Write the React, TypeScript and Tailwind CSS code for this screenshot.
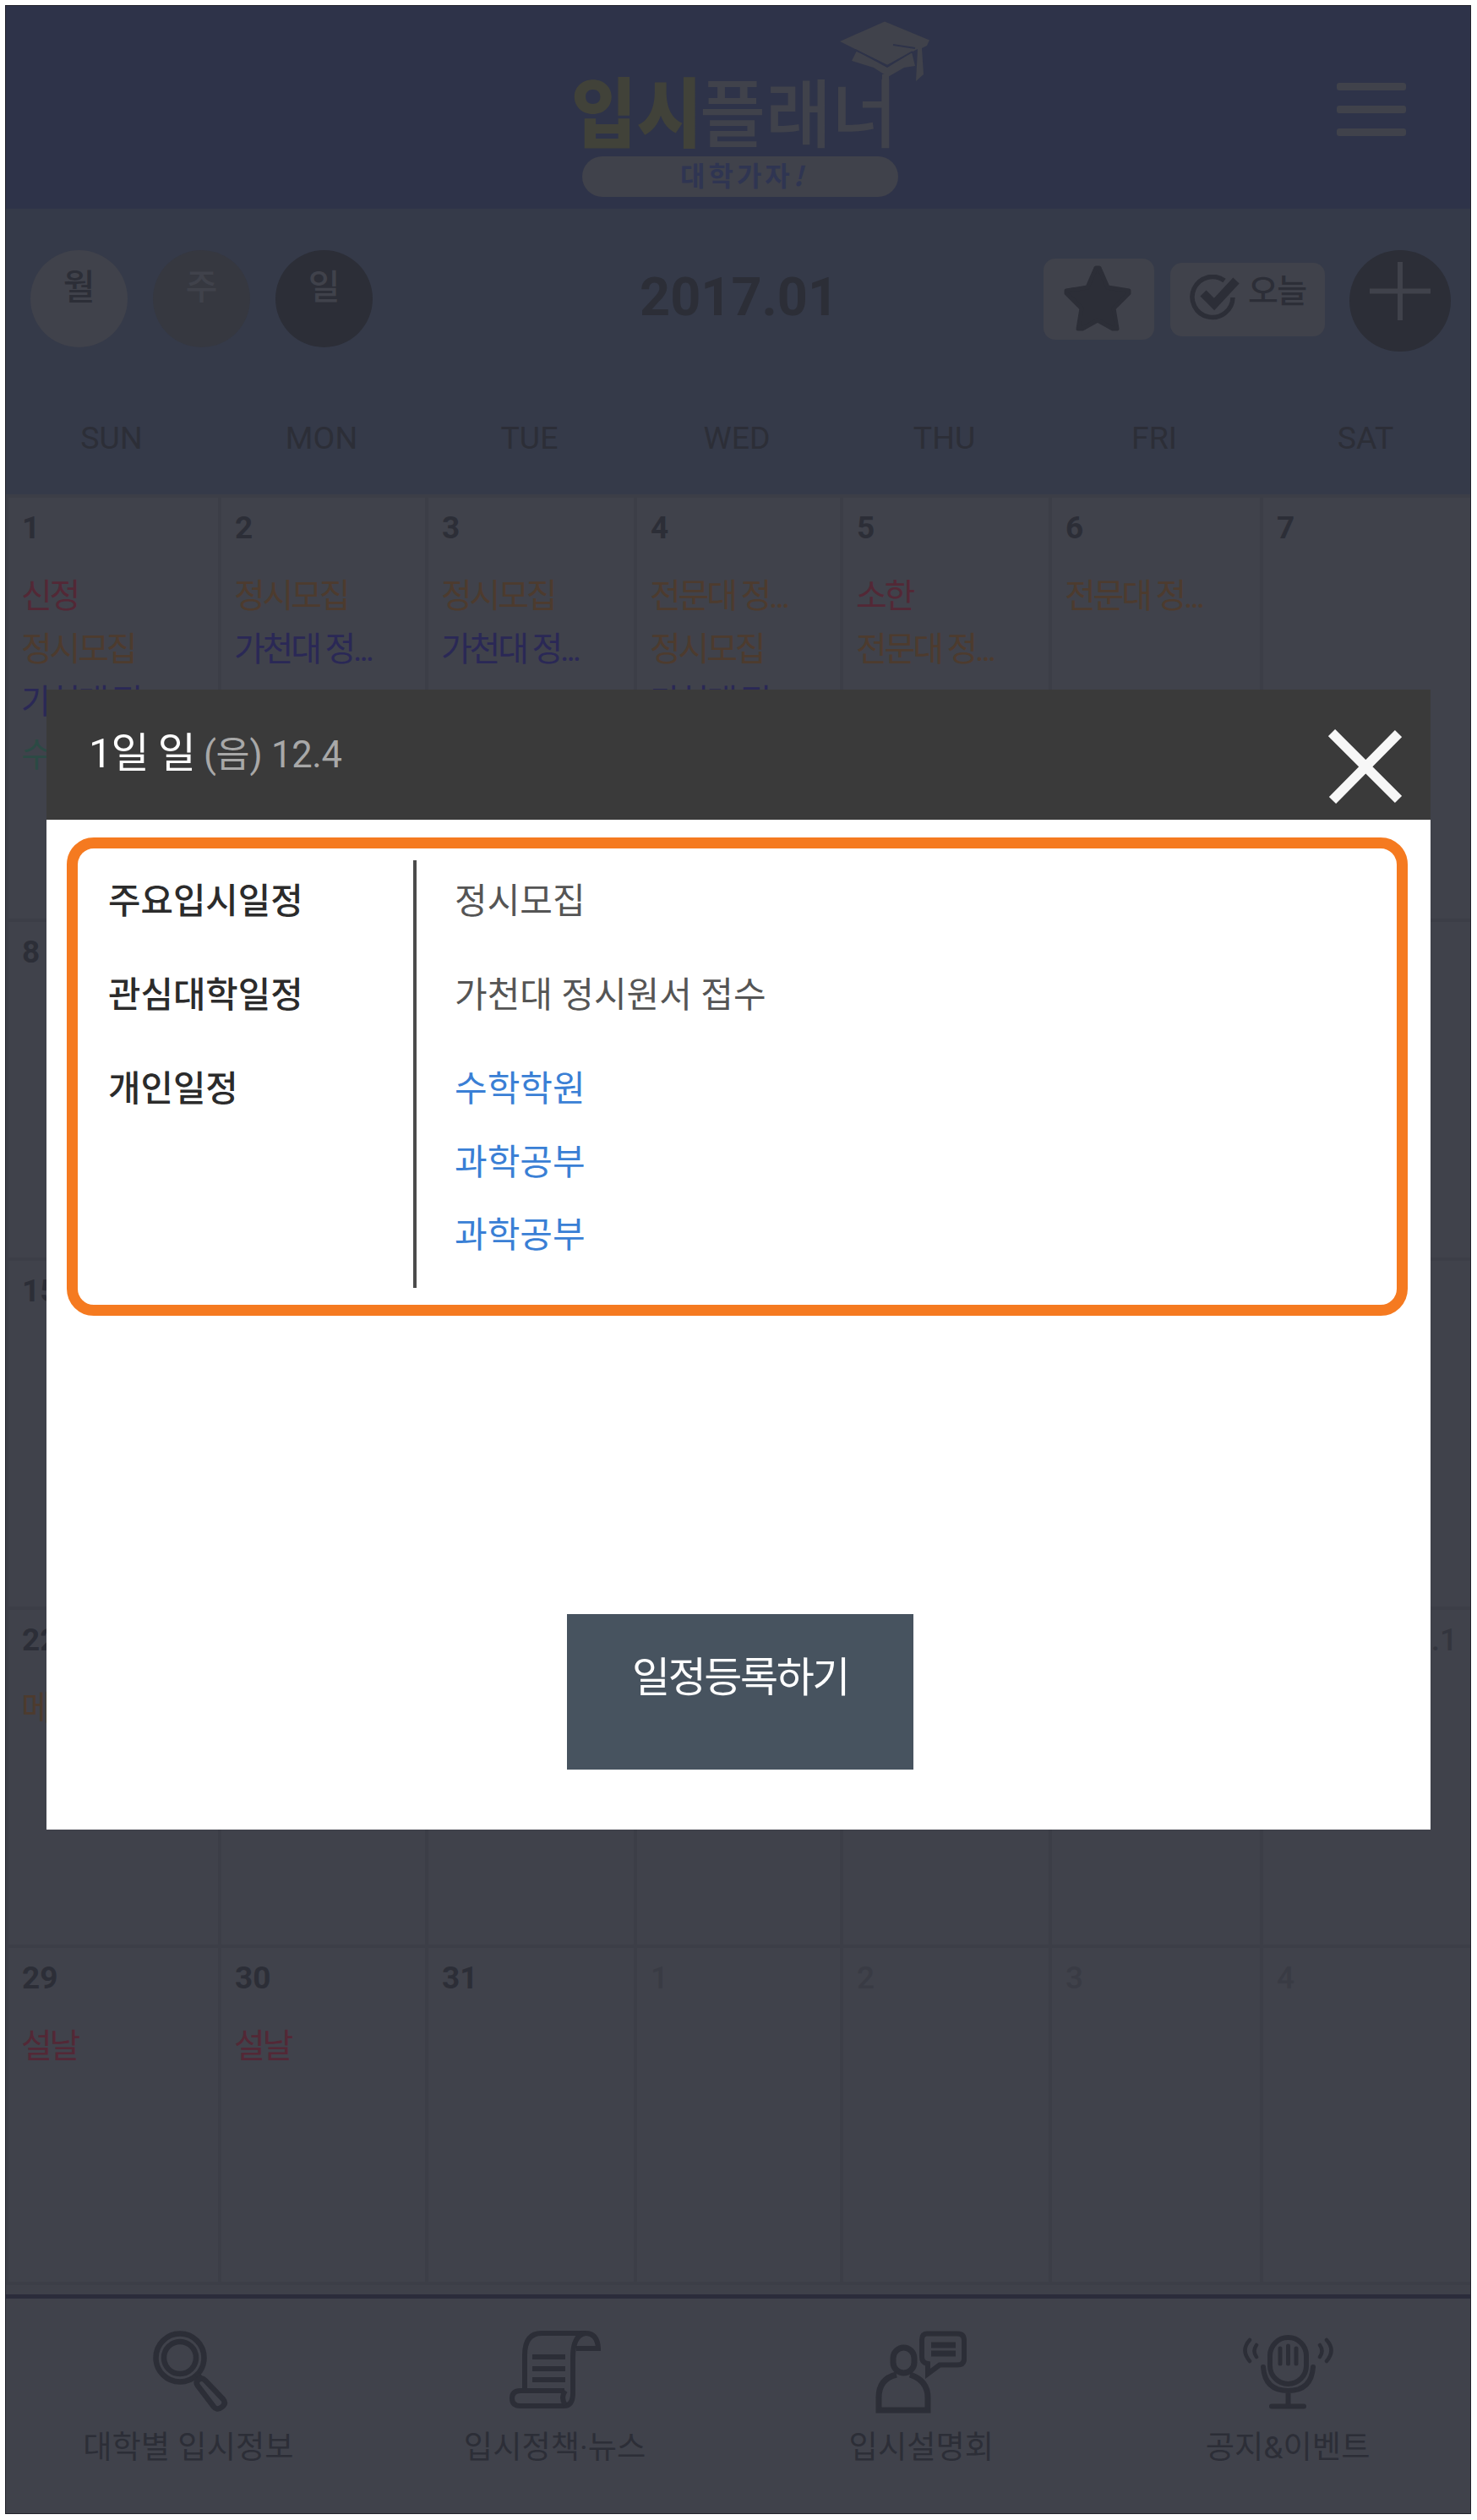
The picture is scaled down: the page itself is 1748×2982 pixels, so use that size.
import { FC, ReactNode } from "react";
import { clsx } from "clsx";

type EventKind = "holiday" | "main" | "univ" | "personal";

interface CalendarEvent {
  kind: EventKind;
  label: string;
}

interface Day {
  date: string;
  lunar?: string;
  muted?: boolean;
  events?: CalendarEvent[];
}

const eventColor: Record<EventKind, string> = {
  holiday: "text-[#532836]",
  main: "text-[#4d3b2e]",
  univ: "text-[#2a2856]",
  personal: "text-[#2b4a44]",
};

const weekdays = ["SUN", "MON", "TUE", "WED", "THU", "FRI", "SAT"];

const main: CalendarEvent = { kind: "main", label: "정시모집" };
const college: CalendarEvent = { kind: "main", label: "전문대 정..." };
const gachon: CalendarEvent = { kind: "univ", label: "가천대 정..." };

const weeks: { height: string; days: Day[] }[] = [
  {
    height: "h-[502px]",
    days: [
      {
        date: "1",
        events: [
          { kind: "holiday", label: "신정" },
          main,
          gachon,
          { kind: "personal", label: "수학학원" },
        ],
      },
      { date: "2", events: [main, gachon] },
      { date: "3", events: [main, gachon] },
      { date: "4", events: [college, main, gachon] },
      { date: "5", events: [{ kind: "holiday", label: "소한" }, college] },
      { date: "6", events: [college] },
      { date: "7" },
    ],
  },
  {
    height: "h-[401px]",
    days: ["8", "9", "10", "11", "12", "13", "14"].map((date) => ({ date })),
  },
  {
    height: "h-[413px]",
    days: ["15", "16", "17", "18", "19", "20", "21"].map((date) => ({ date })),
  },
  {
    height: "h-[400px]",
    days: [
      { date: "22", events: [{ kind: "main", label: "메가" }] },
      { date: "23" },
      { date: "24" },
      { date: "25" },
      { date: "26" },
      { date: "27" },
      { date: "28", lunar: "1.1" },
    ],
  },
  {
    height: "h-[399px]",
    days: [
      { date: "29", events: [{ kind: "holiday", label: "설날" }] },
      { date: "30", events: [{ kind: "holiday", label: "설날" }] },
      { date: "31" },
      { date: "1", muted: true },
      { date: "2", muted: true },
      { date: "3", muted: true },
      { date: "4", muted: true },
    ],
  },
];

const columns = "grid grid-cols-[252px_245px_247px_244px_247px_250px_250px]";

/* Logo with the graduation cap on top of the last letter */
const Logo = () => (
  <svg width="460" height="240" viewBox="0 0 460 240" className="block">
    <g fontFamily="'Noto Sans CJK KR', sans-serif">
      <text
        x="16"
        y="157"
        fontSize="90"
        fontWeight="900"
        fill="#414239"
        textLength="155"
        lengthAdjust="spacingAndGlyphs"
      >
        입시
      </text>
      <text
        x="168"
        y="157"
        fontSize="88"
        fontWeight="500"
        fill="#40424b"
        textLength="234"
        lengthAdjust="spacingAndGlyphs"
      >
        플래너
      </text>
      <rect x="29" y="175" width="374" height="48" rx="24" fill="#40424b" />
      <text
        x="145"
        y="210"
        fontSize="32"
        fontWeight="700"
        fill="#2f3552"
        letterSpacing="4"
      >
        대학가자<tspan fontStyle="italic">!</tspan>
      </text>
    </g>
    <g fill="#40424b">
      <path d="M387 15.500 440 37.500 437 44 431 47 433 78 424 86 426 48 390 67 334 39Z" />
      <path d="M354 50 390 70 419 52 423 68 410 70 391 81 374 70 348 62Z" />
      <path d="M384 78h8v20h-8z" />
    </g>
    <path
      d="M397 43 423 47M352 49l38 19 30-17"
      stroke="#2e3349"
      strokeWidth="2"
      fill="none"
    />
  </svg>
);

const StarIcon = () => (
  <svg width="80" height="78" viewBox="0 0 80 78" fill="#2c2e37" stroke="#2c2e37" strokeWidth="5" strokeLinejoin="round">
    <path d="M38 3h4L52 26 77 30 77 33 59 51 63 75H58L40 65 22 75H17L21 51 3 33 3 30 28 26Z" />
  </svg>
);

const CheckIcon = () => (
  <svg width="60" height="56" viewBox="0 0 60 56" fill="none" stroke="#2c2e37">
    <path d="M41 7A24 24 0 1 0 51 27" strokeWidth="5.500" />
    <path d="M16 22 29 35 55 7" strokeWidth="10" />
  </svg>
);

const MagnifierIcon = () => (
  <svg width="92" height="98" viewBox="0 0 92 98" fill="none" stroke="#2c2e37" strokeWidth="6.500">
    <circle cx="33" cy="32" r="28.500" />
    <circle cx="33" cy="32" r="19" />
    <path d="M53 51 59 58" />
    <path d="M54 65q-3-4 1-7 4-3 8 1L84 81q4 5-1 9-6 5-10 0L54 65Z" strokeLinejoin="round" />
  </svg>
);

const ScrollIcon = () => (
  <svg width="108" height="98" viewBox="0 0 108 98" fill="none" stroke="#2c2e37" strokeWidth="6">
    <path d="M18 71V29Q18 3 38 3h52q14 0 15 18H79" />
    <path d="M90 3Q75 5 75 32v42q0 15-11 15H13Q3 89 3 80t10-9h52" />
    <path d="M66 71q-6 8 0 17" />
    <path d="M27 31h39M27 45h39M27 58h39" />
  </svg>
);

const SpeakerIcon = () => (
  <svg width="108" height="98" viewBox="0 0 108 98" fill="none" stroke="#2c2e37" strokeWidth="7">
    <rect x="21" y="20" width="25" height="30" rx="12.500" />
    <path d="M25 52Q4 57 4 79v15h58V79q0-20-21-27" />
    <path d="M61 3.500h36q8 0 8 8v22q0 7-8 7H76L62 51V39q-7-1-7-8V11q0-7.500 6-7.500Z" strokeWidth="6" />
    <path d="M66 17h29M66 27h29" />
  </svg>
);

const MicIcon = () => (
  <svg width="108" height="98" viewBox="0 0 108 98" fill="none" stroke="#2c2e37" strokeWidth="6" strokeLinecap="round">
    <rect x="33" y="8" width="43" height="55" rx="21.500" />
    <path d="M25 43q2 28 29.500 28T84 43M54.500 72v17M35 89.500h38" />
    <path d="M45 21v18M54.500 18v21M64 21v18" strokeWidth="5" />
    <path d="M9 11Q-2 23 9 36M17 17q-5 7 0 14M100 11q11 12 0 25M92 17q5 7 0 14" strokeWidth="4.500" />
  </svg>
);

const navItems: { label: string; icon: ReactNode }[] = [
  { label: "대학별 입시정보", icon: <MagnifierIcon /> },
  { label: "입시정책·뉴스", icon: <ScrollIcon /> },
  { label: "입시설명회", icon: <SpeakerIcon /> },
  { label: "공지&이벤트", icon: <MicIcon /> },
];

const Header = () => (
  <header className="flex h-[241px] bg-[#2e3349]">
    <div className="ml-[654px] mt-1">
      <Logo />
    </div>
    <div className="ml-[462px] mt-[92px] flex h-[63px] w-[82px] flex-col justify-between">
      <span className="h-[9px] rounded-[3px] bg-[#40424b]" />
      <span className="h-[9px] rounded-[3px] bg-[#40424b]" />
      <span className="h-[9px] rounded-[3px] bg-[#40424b]" />
    </div>
  </header>
);

const ViewButton: FC<{ label: string; className: string }> = ({ label, className }) => (
  <button
    type="button"
    className={clsx(
      "flex size-[115px] justify-center rounded-full pt-[19px] text-[41px] leading-[50px] font-medium",
      className,
    )}
  >
    {label}
  </button>
);

const Toolbar = () => (
  <div className="h-[338px] bg-[#353a49]">
    <div className="flex h-[218px] pt-[49px] pl-[30px]">
      <div className="flex gap-[30px]">
        <ViewButton label="월" className="bg-[#40424b] text-[#2c2e37]" />
        <ViewButton label="주" className="bg-[#363840] text-[#40424b]" />
        <ViewButton label="일" className="bg-[#2c2e37] text-[#40424b]" />
      </div>
      <h1 className="ml-[316px] mt-[18px] w-[231px] text-[63px] leading-[75px] font-bold text-[#2c2e37]">
        2017.01
      </h1>
      <div className="ml-[247px] flex">
        <button
          type="button"
          className="mt-[10px] flex h-[96px] w-[131px] shrink-0 items-center justify-center rounded-[14px] bg-[#40424b] pr-[3px] pb-[3px]"
        >
          <StarIcon />
        </button>
        <button
          type="button"
          className="mt-[15px] ml-[19px] flex h-[87px] w-[183px] shrink-0 rounded-[14px] bg-[#40424b] pt-[14px] pl-[23px]"
        >
          <CheckIcon />
          <span className="mt-[-2px] ml-[9px] text-[39px] leading-[44px] font-medium tracking-[-0.04em] text-[#2c2e37]">
            오늘
          </span>
        </button>
        <button
          type="button"
          className="ml-[29px] flex size-[120px] shrink-0 justify-center rounded-full bg-[#2c2e37] pt-[14px]"
        >
          <svg width="72" height="69" viewBox="0 0 72 69" stroke="#40424b" strokeWidth="6">
            <path d="M36 0v69M0 34.500h72" />
          </svg>
        </button>
      </div>
    </div>
    <div className={clsx(columns, "text-center text-[37.5px] leading-[107px] text-[#2c2e37]")}>
      {weekdays.map((day) => (
        <span key={day}>{day}</span>
      ))}
    </div>
  </div>
);

const DayCell: FC<{ day: Day }> = ({ day }) => (
  <div className="overflow-hidden border-t-4 border-l-4 border-[#3c3e47] pl-4">
    <div
      className={clsx(
        "mt-4 flex justify-between pr-[16px] text-[37px] leading-[40px]",
        day.muted ? "font-medium text-[#393b44]" : "font-bold text-[#2c2e37]",
      )}
    >
      <span>{day.date}</span>
      {day.lunar && <span className="font-medium text-[#33353e]">{day.lunar}</span>}
    </div>
    <ul className="-ml-px mt-[30px] text-[40px] leading-[62.7px] tracking-[-0.08em] whitespace-nowrap">
      {day.events?.map((event) => (
        <li key={event.label} className={eventColor[event.kind]}>
          {event.label}
        </li>
      ))}
    </ul>
  </div>
);

const BottomNav = () => (
  <nav className="grid h-[260px] grid-cols-4 border-t-[5px] border-[#2b2c3b] bg-[#40424b]">
    {navItems.map((item, i) => (
      <a key={item.label} className="flex flex-col items-center pt-[38px] text-[#2c2e37]">
        <span className={clsx("h-[98px]", i === 0 && "ml-1.5")}>{item.icon}</span>
        <span className="mt-[13px] text-[37.3px] leading-[54px]">{item.label}</span>
      </a>
    ))}
  </nav>
);

const ScheduleRow: FC<{ title: string; items: string[]; link?: boolean }> = ({
  title,
  items,
  link,
}) => (
  <div className="flex">
    <dt className="w-[401px] shrink-0 border-r-4 border-[#4b4b4b] pt-[17px] pl-[36px] text-[41.8px] leading-[64px] font-medium text-[#2b2b2b]">
      {title}
    </dt>
    <dd
      className={clsx(
        "flex flex-col gap-[22.500px] pt-[17px] pb-[30px] pl-[45px] text-[42px] leading-[64px]",
        link ? "text-[#3a7fd5]" : "text-[#555]",
      )}
    >
      {items.map((item, i) => (
        <span key={i}>{item}</span>
      ))}
    </dd>
  </div>
);

const DayModal = () => (
  <section className="absolute top-[810px] left-[49px] h-[1349px] w-[1638px] bg-white">
    <div className="flex h-[154px] items-start justify-between bg-[#3a3a3a] pr-[34px] pl-[50px]">
      <h2 className="mt-[38px] flex items-baseline text-[49px] leading-[76px] tracking-[-0.02em] text-white">
        1일 일
        <span className="ml-[10px] text-[43.5px] tracking-[-0.005em] text-[#a8a8a8]">
          (음) 12.4
        </span>
      </h2>
      <button type="button" className="mt-[47px]">
        <svg width="87" height="88" viewBox="0 0 87 88" stroke="#f7f7f7" strokeWidth="11.500" strokeLinejoin="round">
          <path d="M4 4 83 83M83 5 5 84" />
        </svg>
      </button>
    </div>
    <dl className="mt-[21px] ml-6 h-[566px] w-[1587px] rounded-[32px] border-[13px] border-[#f57a20] pt-[14px]">
      <ScheduleRow title="주요입시일정" items={["정시모집"]} />
      <ScheduleRow title="관심대학일정" items={["가천대 정시원서 접수"]} />
      <ScheduleRow title="개인일정" items={["수학학원", "과학공부", "과학공부"]} link />
    </dl>
    <button
      type="button"
      className="mt-[353px] ml-[616px] flex h-[184px] w-[410px] justify-center bg-[#47535f] pt-[44px] text-[49px] leading-[64px] tracking-[-0.05em] text-white"
    >
      일정등록하기
    </button>
  </section>
);

const App = () => (
  <div className="h-[2982px] w-[1748px] bg-white pt-[6px] pl-[6px] font-[Roboto,'Noto_Sans_CJK_KR',sans-serif]">
    <main className="relative h-[2969px] w-[1735px] bg-[#3f414a]">
      <Header />
      <Toolbar />
      {weeks.map((week, i) => (
        <div key={i} className={clsx(columns, week.height, "bg-[#40424b]")}>
          {week.days.map((day) => (
            <DayCell key={day.date} day={day} />
          ))}
        </div>
      ))}
      <div className="h-[15px] border-t-4 border-[#3c3e47]" />
      <BottomNav />
      {/* thin dark frame drawn over the page edges */}
      <div className="pointer-events-none absolute inset-0 border border-[#22232c]" />
      <DayModal />
    </main>
  </div>
);

export default App;
